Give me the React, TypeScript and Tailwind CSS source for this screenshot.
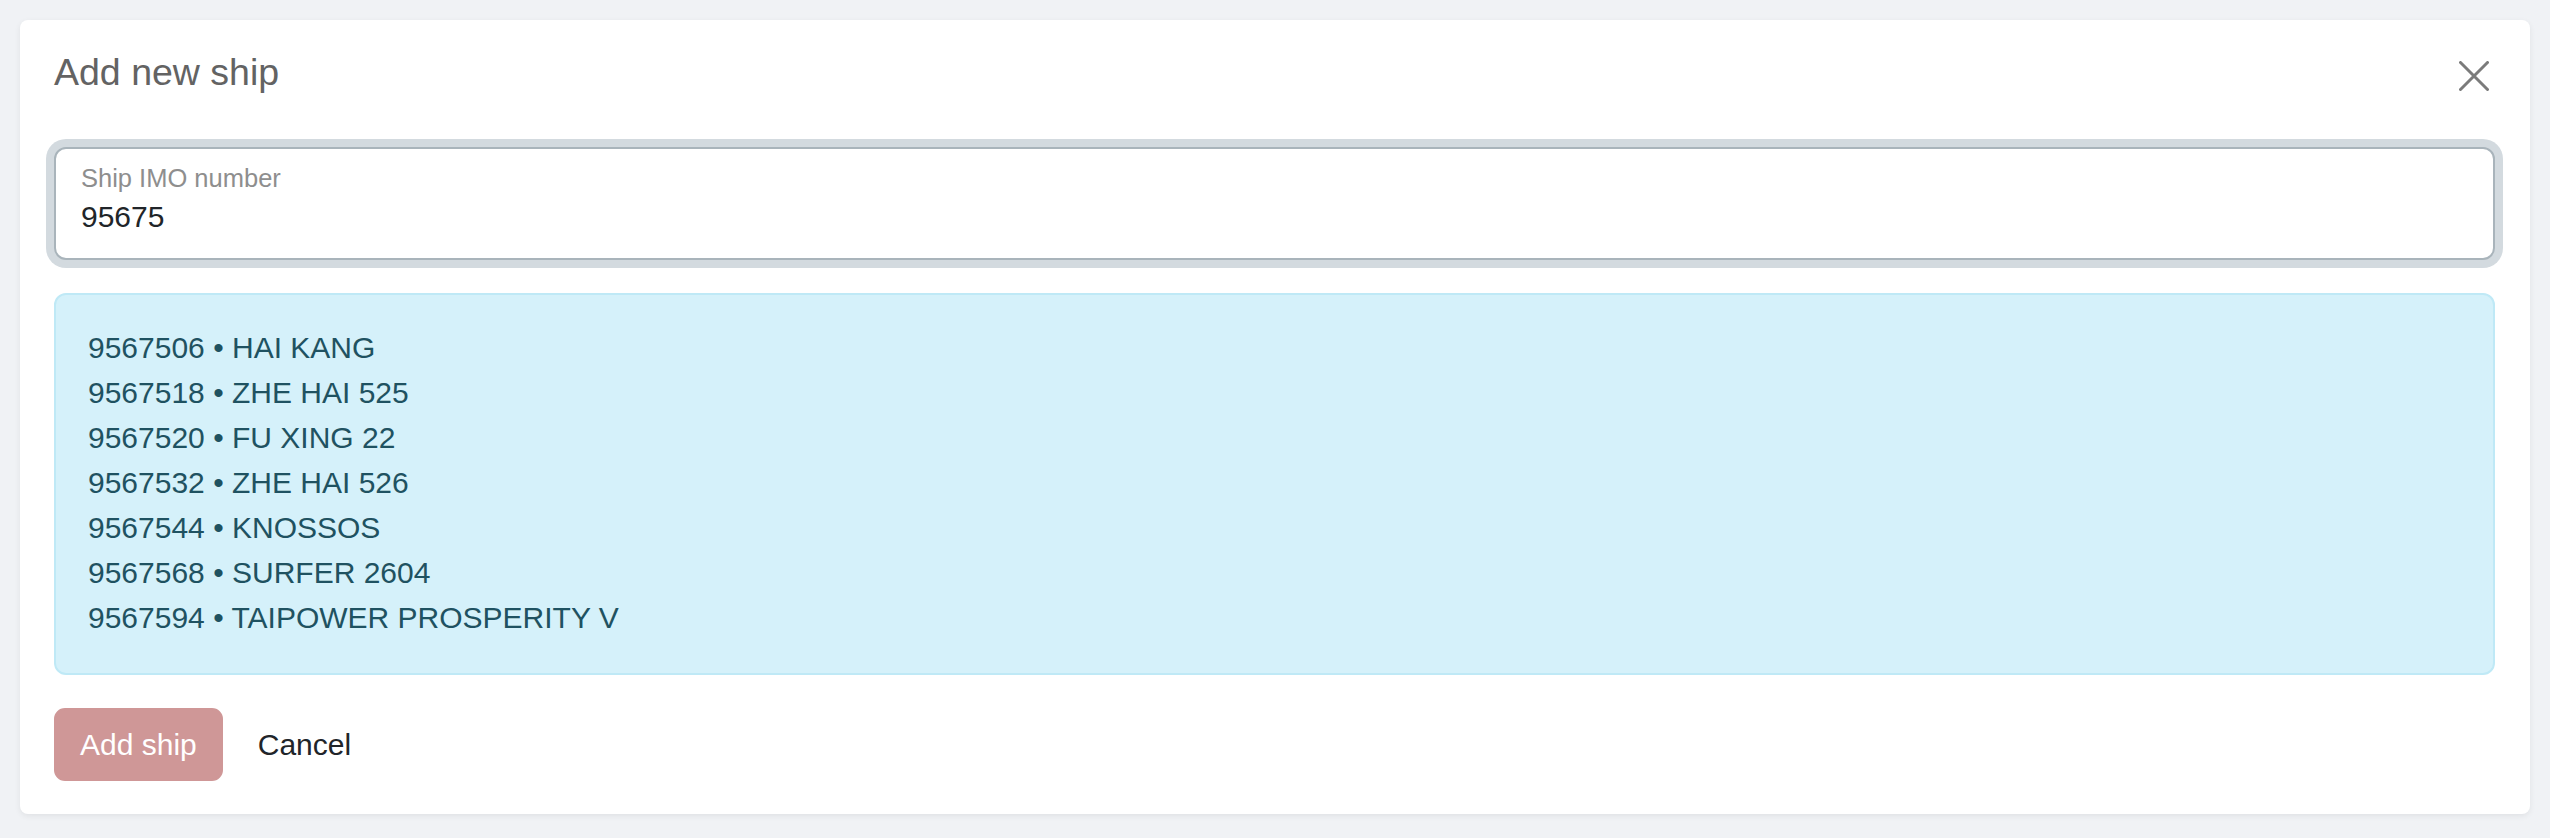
const ships = [
  { imo: "9567506", name: "HAI KANG" },
  { imo: "9567518", name: "ZHE HAI 525" },
  { imo: "9567520", name: "FU XING 22" },
  { imo: "9567532", name: "ZHE HAI 526" },
  { imo: "9567544", name: "KNOSSOS" },
  { imo: "9567568", name: "SURFER 2604" },
  { imo: "9567594", name: "TAIPOWER PROSPERITY V" },
];

const CloseIcon = () => (
  <svg width="30" height="30" viewBox="0 0 30 30" fill="none">
    <path d="M1.5 1.5 L28.5 28.5 M28.5 1.5 L1.5 28.5" stroke="#7b7b7b" strokeWidth="3" strokeLinecap="round" />
  </svg>
);

const App = () => {
  return (
    <div className="min-h-screen bg-[#f0f2f5] p-[20px] font-['Liberation_Sans',Arial,sans-serif]">
      <div className="rounded-[8px] bg-white pt-[30px] pb-[33px] pl-[34px] pr-[35px] shadow-[0_2px_6px_rgba(0,0,0,0.07)]">
        <div className="flex items-start justify-between">
          <h5 className="text-[37.5px] leading-[45px] text-[#636363]">Add new ship</h5>
          <button className="mt-[11px] mr-[6px]" aria-label="Close">
            <CloseIcon />
          </button>
        </div>

        <div className="mt-[52px] rounded-[12px] border-2 border-[#a9b4bb] bg-white pt-[14px] pb-[23px] pl-[25px] pr-[25px] shadow-[0_0_0_8px_#d3dadf]">
          <label className="block text-[25.5px] leading-[30px] text-[#8e8e8e]" htmlFor="imo">
            Ship IMO number
          </label>
          <input
            id="imo"
            type="text"
            defaultValue="95675"
            className="mt-[6px] block h-[36px] w-full bg-transparent text-[30px] leading-[36px] text-[#212529] outline-none"
          />
        </div>

        <div className="mt-[33px] rounded-[12px] border-2 border-[#bfe9f6] bg-[#d5f1fa] pt-[30px] pb-[33px] pl-[32px] pr-[32px] text-[30px] leading-[45px] text-[#1f5261]">
          {ships.map(s => (
            <div key={s.imo}>
              {s.imo} • {s.name}
            </div>
          ))}
        </div>

        <div className="mt-[33px] flex items-center">
          <button className="rounded-[11px] border-2 border-[#cf9797] bg-[#cf9797] px-[24px] py-[12px] text-[30px] leading-[45px] text-white">
            Add ship
          </button>
          <button className="ml-[35px] text-[30px] leading-[45px] text-[#212529]">Cancel</button>
        </div>
      </div>
    </div>
  );
};

export default App;
